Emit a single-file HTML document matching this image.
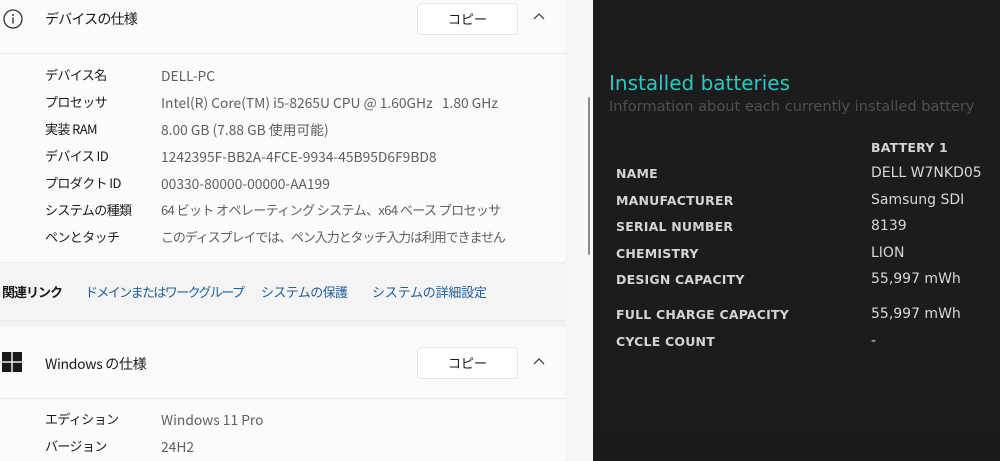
<!DOCTYPE html>
<html><head><meta charset="utf-8"><style>
*{margin:0;padding:0;box-sizing:border-box}
body{width:1000px;height:461px;overflow:hidden;background:#f3f3f3;font-family:"Noto Sans CJK JP",sans-serif;position:relative}
.a{position:absolute;white-space:nowrap;line-height:18px}
.card{position:absolute;left:0;width:566px;background:#fbfbfb;border-radius:0 4px 4px 0}
.lab{font-size:13px;color:#1a1a1a;letter-spacing:-0.6px}
.val{font-size:13.8px;color:#5f5f5f;letter-spacing:0}
.cj{font-size:13px;letter-spacing:-0.6px}
.btn{position:absolute;width:101px;height:32px;background:#fff;border:1px solid #e6e6e6;border-radius:4px;font-size:13px;color:#1a1a1a;text-align:center;line-height:30px}
.dark{position:absolute;left:593px;top:0;width:407px;height:461px;background:#1c1c1c}
.k{font-family:"DejaVu Sans",sans-serif;font-weight:bold;font-size:12.5px;color:#d4d4d4;left:23px;letter-spacing:.2px}
.v{font-family:"DejaVu Sans",sans-serif;font-size:14px;color:#d8d8d8;left:278px}
.lk{font-size:13px;color:#1f5f9c;letter-spacing:-1.1px;top:283px}
</style></head><body>
<div class="card" style="top:0;height:262px"></div>
<div class="a" style="left:0;top:53px;width:566px;height:1px;background:#e8e8e8"></div>
<svg class="a" style="left:2px;top:8px" width="22" height="22"><circle cx="11" cy="11" r="9" fill="none" stroke="#333" stroke-width="1.3"/><circle cx="11" cy="7" r="1" fill="#333"/><rect x="10.3" y="9.5" width="1.4" height="6" fill="#333"/></svg>
<div class="a" style="left:45px;top:10px;font-size:14px;color:#1a1a1a;letter-spacing:-0.8px">デバイスの仕様</div>
<div class="btn" style="left:417px;top:3px">コピー</div>
<svg class="a" style="left:532px;top:12px" width="14" height="10"><path d="M2 7 L7 2 L12 7" fill="none" stroke="#333" stroke-width="1.2"/></svg>

<div class="a lab" style="left:45px;top:66px">デバイス名</div><div class="a val" style="left:161px;top:66px">DELL-PC</div>
<div class="a lab" style="left:45px;top:93px">プロセッサ</div><div class="a val" style="left:161px;top:93px">Intel(R) Core(TM) i5-8265U CPU @ 1.60GHz&nbsp;&nbsp;&nbsp;1.80 GHz</div>
<div class="a lab" style="left:45px;top:120px">実装 RAM</div><div class="a val" style="left:161px;top:120px">8.00 GB (7.88 GB 使用可能)</div>
<div class="a lab" style="left:45px;top:147px">デバイス ID</div><div class="a val" style="left:161px;top:147px">1242395F-BB2A-4FCE-9934-45B95D6F9BD8</div>
<div class="a lab" style="left:45px;top:174px">プロダクト ID</div><div class="a val" style="left:161px;top:174px">00330-80000-00000-AA199</div>
<div class="a lab" style="left:45px;top:201px">システムの種類</div><div class="a val cj" style="left:161px;top:201px">64 ビット オペレーティング システム、x64 ベース プロセッサ</div>
<div class="a lab" style="left:45px;top:228px">ペンとタッチ</div><div class="a val cj" style="left:161px;top:228px;letter-spacing:-1.1px">このディスプレイでは、ペン入力とタッチ入力は利用できません</div>

<div class="a" style="left:0;top:262px;width:566px;height:59px;background:#f4f4f4;border-top:1px solid #ececec;border-bottom:1px solid #ececec"></div>
<div class="a" style="left:2px;top:283px;font-size:13px;font-weight:bold;color:#1a1a1a;letter-spacing:-1px">関連リンク</div>
<div class="a lk" style="left:85px;letter-spacing:-1.6px">ドメインまたはワークグループ</div>
<div class="a lk" style="left:261px;letter-spacing:-0.6px">システムの保護</div>
<div class="a lk" style="left:372px;letter-spacing:-0.2px">システムの詳細設定</div>

<div class="card" style="top:327px;height:134px"></div>
<div class="a" style="left:0;top:398px;width:566px;height:1px;background:#e8e8e8"></div>
<svg class="a" style="left:2px;top:352px" width="20" height="20"><rect x="0" y="0" width="9.3" height="9.3" fill="#1a1a1a"/><rect x="10.7" y="0" width="9.3" height="9.3" fill="#1a1a1a"/><rect x="0" y="10.7" width="9.3" height="9.3" fill="#1a1a1a"/><rect x="10.7" y="10.7" width="9.3" height="9.3" fill="#1a1a1a"/></svg>
<div class="a" style="left:45px;top:355px;font-size:14px;color:#1a1a1a;letter-spacing:-0.3px">Windows の仕様</div>
<div class="btn" style="left:417px;top:347px">コピー</div>
<svg class="a" style="left:532px;top:357px" width="14" height="10"><path d="M2 7 L7 2 L12 7" fill="none" stroke="#333" stroke-width="1.2"/></svg>
<div class="a lab" style="left:45px;top:410px">エディション</div><div class="a val" style="left:161px;top:410px">Windows 11 Pro</div>
<div class="a lab" style="left:45px;top:437px">バージョン</div><div class="a val" style="left:161px;top:437px">24H2</div>

<div class="a" style="left:567px;top:0;width:26px;height:461px;background:#f8f8f8"></div>
<div class="a" style="left:588px;top:97px;width:2px;height:158px;background:#8a8a8a;border-radius:1px"></div>

<div class="dark">
<div class="a" style="left:16px;top:71px;font-family:'DejaVu Sans',sans-serif;font-size:20px;line-height:24px;color:#2ec4c4">Installed batteries</div>
<div class="a" style="left:16px;top:98px;font-family:'DejaVu Sans',sans-serif;font-size:14.6px;color:#4f4f4f">Information about each currently installed battery</div>
<div class="a k" style="left:278px;top:139px">BATTERY 1</div>
<div class="a k" style="top:165px">NAME</div><div class="a v" style="top:164px">DELL W7NKD05</div>
<div class="a k" style="top:192px">MANUFACTURER</div><div class="a v" style="top:191px">Samsung SDI</div>
<div class="a k" style="top:218px">SERIAL NUMBER</div><div class="a v" style="top:217px">8139</div>
<div class="a k" style="top:245px">CHEMISTRY</div><div class="a v" style="top:244px">LION</div>
<div class="a k" style="top:271px">DESIGN CAPACITY</div><div class="a v" style="top:270px">55,997 mWh</div>
<div class="a k" style="top:306px">FULL CHARGE CAPACITY</div><div class="a v" style="top:305px">55,997 mWh</div>
<div class="a k" style="top:333px">CYCLE COUNT</div><div class="a v" style="top:332px">-</div>
<div class="a" style="left:0;top:432px;width:407px;height:29px;background:#1a1a1a"></div>
</div>
</body></html>
